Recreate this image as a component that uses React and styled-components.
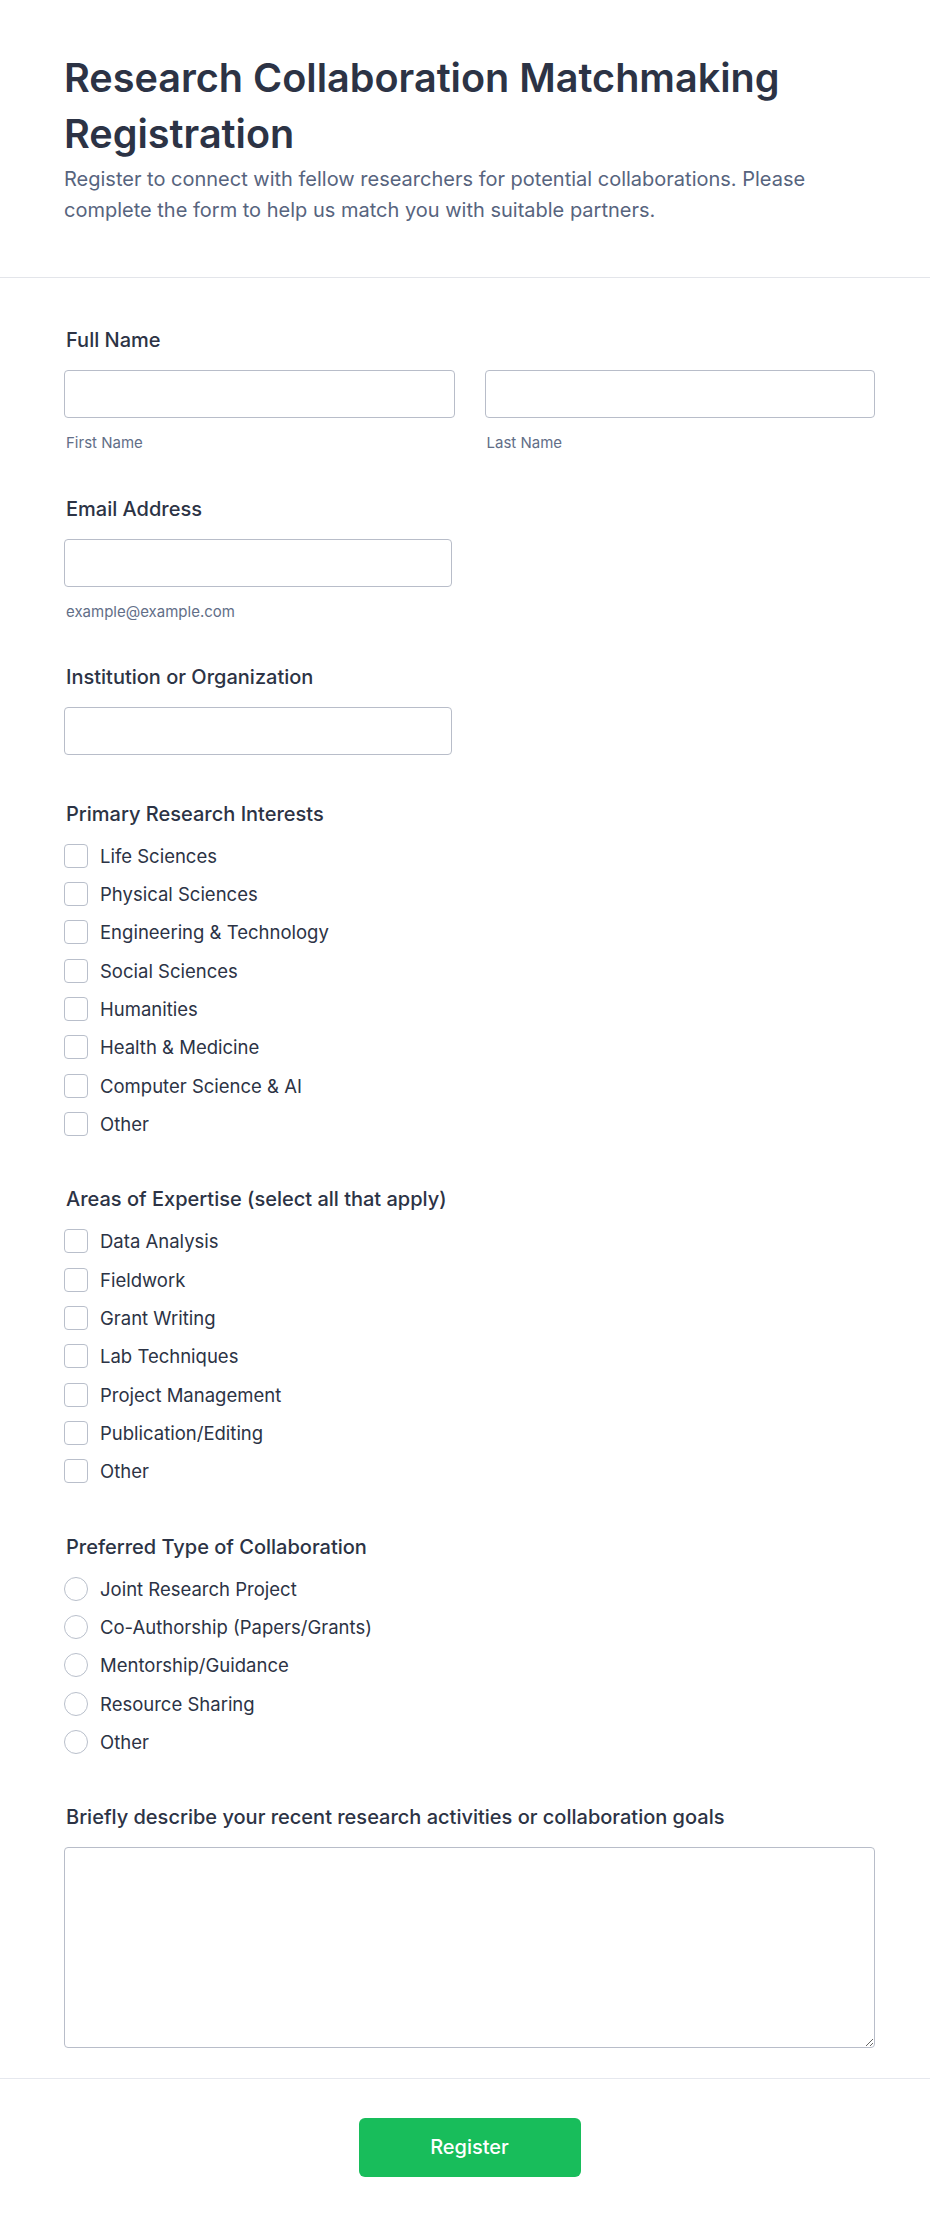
import React from "react";
import styled, { createGlobalStyle } from "styled-components";

const GlobalStyle = createGlobalStyle`
  * {
    box-sizing: border-box;
  }
  body {
    margin: 0;
    background: #fff;
    font-family: Inter, "Noto Sans", "Liberation Sans", sans-serif;
    color: #2c3345;
  }
`;

const Page = styled.div`
  width: 930px;
`;

const Header = styled.header`
  padding: 50px 55px 51px 64px;
  border-bottom: 1px solid #e3e5ea;
`;

const Title = styled.h1`
  margin: 0;
  font-size: 39.6px;
  line-height: 56px;
  font-weight: 600;
  color: #2c3345;
`;

const Subtitle = styled.p`
  margin: 2px 0 0;
  font-size: 20px;
  line-height: 31px;
  color: #57647e;
`;

const FormBody = styled.form`
  padding: 48px 55px 30px 64px;
  border-bottom: 1px solid #e6e8ee;
`;

const Field = styled.div`
  margin-bottom: ${({ $last }) => ($last ? "0" : "44.6px")};
`;

const Label = styled.label`
  display: block;
  margin-bottom: 16px;
  padding-left: 2px;
  font-size: 20px;
  line-height: 28px;
  font-weight: 450;
  color: #2c3345;
`;

const NameRow = styled.div`
  display: grid;
  grid-template-columns: 1fr 1fr;
  column-gap: 30px;
`;

const Input = styled.input`
  display: block;
  width: ${({ $width }) => $width || "100%"};
  height: 48px;
  padding: 0 12px;
  border: 1px solid #b8bdc9;
  border-radius: 4px;
  background: #fff;
  font: inherit;
  font-size: 18px;
  color: #2c3345;
  outline: none;
`;

const SubLabel = styled.span`
  display: block;
  margin: 16px 0 -2px;
  padding-left: 2px;
  font-size: 15px;
  line-height: 18px;
  color: #626e87;
`;

const Options = styled.div`
  display: flex;
  flex-direction: column;
  gap: 14.33px;
  padding-bottom: 4.7px;
`;

const Option = styled.label`
  display: flex;
  align-items: center;
  gap: 12px;
  height: 24px;
  font-size: 18.5px;
  line-height: 24px;
  color: #2c3345;
`;

const Box = styled.input`
  appearance: none;
  margin: 0;
  flex: none;
  width: 24px;
  height: 24px;
  border: 1px solid #b9bfcb;
  border-radius: ${({ type }) => (type === "radio" ? "50%" : "4px")};
  background: #fff;
`;

const TextArea = styled.textarea`
  display: block;
  width: 100%;
  height: 201px;
  padding: 10px 12px;
  border: 1px solid #b8bdc9;
  border-radius: 4px;
  font: inherit;
  font-size: 18px;
  outline: none;
  resize: vertical;
`;

const Footer = styled.div`
  display: flex;
  justify-content: center;
  padding: 38.5px 55px 50px 64px;
`;

const SubmitButton = styled.button`
  width: 222px;
  height: 59px;
  border: none;
  border-radius: 6px;
  background: #18bd5b;
  color: #fff;
  font-family: inherit;
  font-size: 20px;
  font-weight: 500;
  cursor: pointer;
`;

const interests = [
  "Life Sciences",
  "Physical Sciences",
  "Engineering & Technology",
  "Social Sciences",
  "Humanities",
  "Health & Medicine",
  "Computer Science & AI",
  "Other",
];

const expertise = [
  "Data Analysis",
  "Fieldwork",
  "Grant Writing",
  "Lab Techniques",
  "Project Management",
  "Publication/Editing",
  "Other",
];

const collaboration = [
  "Joint Research Project",
  "Co-Authorship (Papers/Grants)",
  "Mentorship/Guidance",
  "Resource Sharing",
  "Other",
];

const OptionGroup = ({ name, type, items }) => (
  <Options>
    {items.map((item) => (
      <Option key={item}>
        <Box type={type} name={name} value={item} />
        {item}
      </Option>
    ))}
  </Options>
);

const App = () => {
  return (
    <Page>
      <GlobalStyle />
      <Header>
        <Title>Research Collaboration Matchmaking Registration</Title>
        <Subtitle>
          Register to connect with fellow researchers for potential
          collaborations. Please complete the form to help us match you with
          suitable partners.
        </Subtitle>
      </Header>

      <FormBody onSubmit={(e) => e.preventDefault()}>
        <Field>
          <Label>Full Name</Label>
          <NameRow>
            <div>
              <Input type="text" />
              <SubLabel>First Name</SubLabel>
            </div>
            <div>
              <Input type="text" />
              <SubLabel>Last Name</SubLabel>
            </div>
          </NameRow>
        </Field>

        <Field>
          <Label>Email Address</Label>
          <Input type="email" $width="388px" />
          <SubLabel>example@example.com</SubLabel>
        </Field>

        <Field>
          <Label>Institution or Organization</Label>
          <Input type="text" $width="388px" />
        </Field>

        <Field>
          <Label>Primary Research Interests</Label>
          <OptionGroup name="interests" type="checkbox" items={interests} />
        </Field>

        <Field>
          <Label>Areas of Expertise (select all that apply)</Label>
          <OptionGroup name="expertise" type="checkbox" items={expertise} />
        </Field>

        <Field>
          <Label>Preferred Type of Collaboration</Label>
          <OptionGroup name="collab" type="radio" items={collaboration} />
        </Field>

        <Field $last>
          <Label>
            Briefly describe your recent research activities or collaboration
            goals
          </Label>
          <TextArea />
        </Field>
      </FormBody>

      <Footer>
        <SubmitButton type="button">Register</SubmitButton>
      </Footer>
    </Page>
  );
};

export default App;
